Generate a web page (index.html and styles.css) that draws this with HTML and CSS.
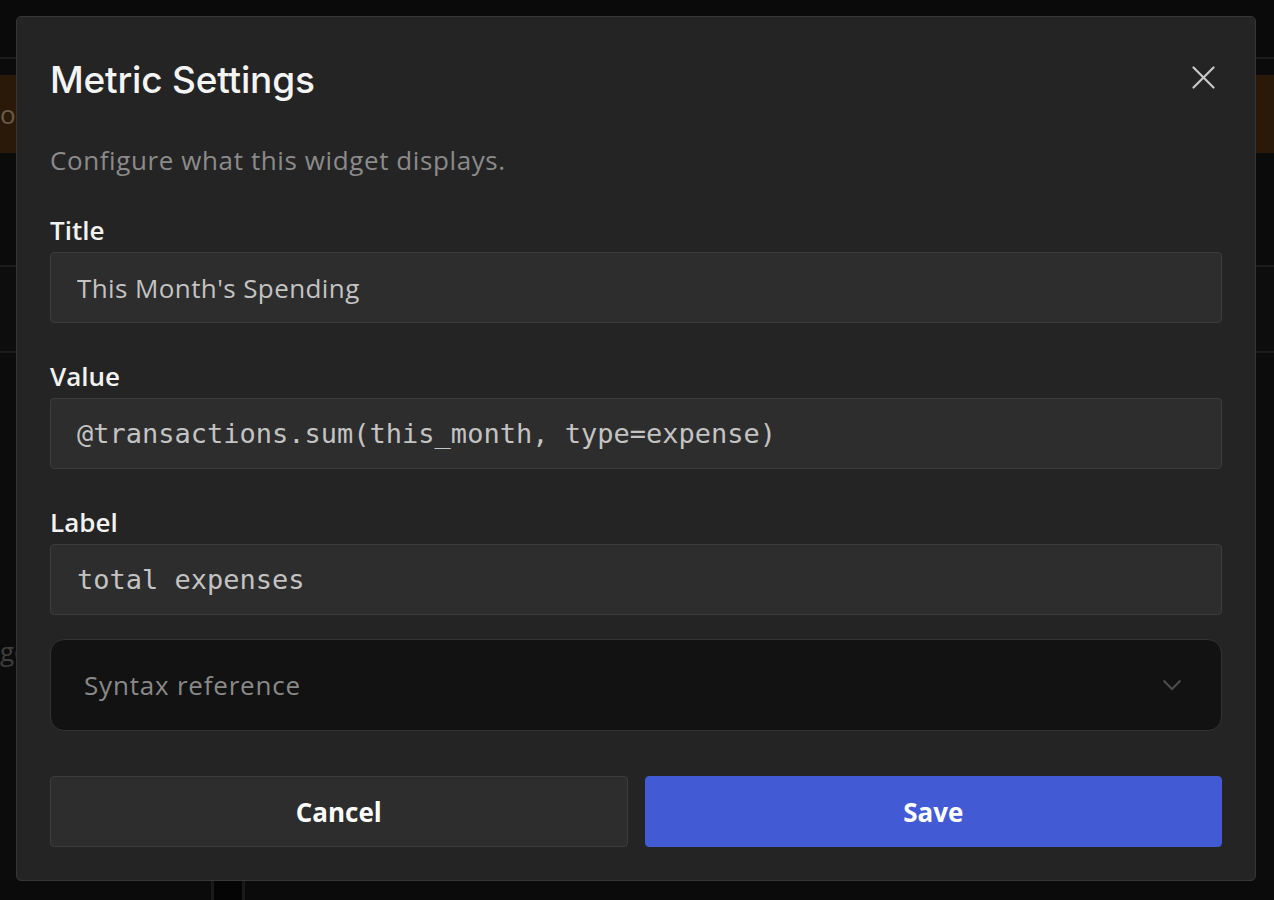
FILE: index.html
```html
<!DOCTYPE html>
<html lang="en">
<head>
    <meta charset="UTF-8">
    <meta name="viewport" content="width=device-width, initial-scale=1.0">
    <title>Metric Settings</title>
    <link rel="stylesheet" href="styles.css">
</head>
<body>
    <div class="page">
        <div class="topbar"></div>
        <div class="banner"><span class="banner-text">on</span></div>
        <div class="row row-one"></div>
        <div class="row row-two"><span class="row-text">ge</span></div>
        <div class="footer-strip"></div>
    </div>

    <div class="overlay">
        <div class="modal">
            <div class="modal-header">
                <h1>Metric Settings</h1>
                <button type="button" class="close-btn" aria-label="Close">
                    <svg width="23" height="23" viewBox="0 0 23 23">
                        <path d="M1.5 1.5 L21.5 21.5 M21.5 1.5 L1.5 21.5" stroke="#c9c9c9" stroke-width="2.2" stroke-linecap="round" fill="none"/>
                    </svg>
                </button>
            </div>

            <p class="subtitle">Configure what this widget displays.</p>

            <form class="fields">
                <div class="field">
                    <label for="title">Title</label>
                    <input type="text" id="title" value="This Month's Spending">
                </div>
                <div class="field">
                    <label for="value">Value</label>
                    <input type="text" id="value" class="mono" value="@transactions.sum(this_month, type=expense)">
                </div>
                <div class="field">
                    <label for="label">Label</label>
                    <input type="text" id="label" class="mono" value="total expenses">
                </div>
            </form>

            <div class="syntax">
                <span>Syntax reference</span>
                <svg width="20" height="12" viewBox="0 0 20 12">
                    <path d="M1.5 1.5 L10 10 L18.5 1.5" stroke="#4d4d4d" stroke-width="2" fill="none"/>
                </svg>
            </div>

            <div class="actions">
                <button type="button" class="btn btn-cancel">Cancel</button>
                <button type="button" class="btn btn-save">Save</button>
            </div>
        </div>
    </div>
</body>
</html>
```

FILE: styles.css
```css
body {
    margin: 0;
    background-color: #0b0b0b;
    font-family: "Open Sans", "Noto Sans", sans-serif;
    height: 900px;
    overflow: hidden;
}

/* dimmed dashboard behind the dialog */
.page {
    display: flex;
    flex-direction: column;
    height: 900px;
}

.topbar {
    height: 57px;
    border-bottom: 2px solid #1c1c1c;
    background-color: #0a0a0a;
}

.banner {
    margin-top: 16px;
    height: 78px;
    background-color: #2a1909;
    display: flex;
    align-items: center;
    overflow: hidden;
}

.banner-text {
    margin-left: 0;
    color: #6a5a4a;
    font-size: 26px;
    white-space: nowrap;
}

.row-one {
    margin-top: 112px;
    height: 84px;
    border-top: 2px solid #1c1c1c;
    border-bottom: 2px solid #1c1c1c;
    background-color: #0d0d0d;
}

.row-two {
    flex: 1;
    display: flex;
    align-items: flex-start;
    overflow: hidden;
    background-color: #0c0c0c;
}

.row-text {
    margin-top: 280px;
    margin-left: 0;
    color: #3e3e3e;
    font-size: 26px;
    white-space: nowrap;
}

.footer-strip {
    height: 19px;
    margin-left: 211px;
    width: 28px;
    background-color: #050505;
    border-left: 3px solid #1a1a1a;
    border-right: 3px solid #1a1a1a;
}

.overlay {
    position: fixed;
    inset: 0;
    display: flex;
    justify-content: flex-start;
    align-items: flex-start;
    padding: 16px 0 0 16px;
}

.modal {
    width: 1240px;
    box-sizing: border-box;
    padding: 33px;
    background-color: #242424;
    border: 1px solid #363636;
    border-radius: 5px;
}

.modal-header {
    display: flex;
    justify-content: space-between;
    align-items: flex-start;
    height: 60px;
}

.modal-header h1 {
    margin: 0;
    font-family: Inter, "Noto Sans", sans-serif;
    font-weight: 500;
    font-size: 37px;
    line-height: 60px;
    color: #f4f4f4;
    letter-spacing: -0.2px;
}

.close-btn {
    margin-top: 16px;
    margin-right: 7px;
    padding: 0;
    border: none;
    background: none;
    width: 23px;
    height: 23px;
    cursor: pointer;
}

.subtitle {
    margin: 32px 0 0;
    font-size: 26px;
    letter-spacing: 0.6px;
    line-height: 36px;
    color: #8b8b8b;
}

.fields {
    margin-top: 34px;
    display: flex;
    flex-direction: column;
    gap: 35px;
}

.field {
    display: flex;
    flex-direction: column;
    gap: 4px;
}

label {
    font-size: 26px;
    font-weight: 600;
    line-height: 36px;
    color: #f2f2f2;
}

input {
    height: 71px;
    box-sizing: border-box;
    padding: 0 26px;
    background-color: #2d2d2d;
    border: 1px solid #3c3c3c;
    border-radius: 4px;
    font-family: "Open Sans", "Noto Sans", sans-serif;
    font-size: 26px;
    letter-spacing: 0.4px;
    color: #c3c3c3;
    outline: none;
}

input.mono {
    font-family: "DejaVu Sans Mono", monospace;
    font-size: 27px;
    letter-spacing: 0;
}

.syntax {
    margin-top: 24px;
    height: 92px;
    box-sizing: border-box;
    padding: 0 39px 0 33px;
    display: flex;
    align-items: center;
    justify-content: space-between;
    background-color: #121212;
    border: 1px solid #333;
    border-radius: 14px;
    font-size: 26px;
    letter-spacing: 0.8px;
    color: #898989;
}

.actions {
    margin-top: 45px;
    display: flex;
    gap: 17px;
}

.btn {
    flex: 1;
    height: 71px;
    border-radius: 4px;
    font-family: "Open Sans", "Noto Sans", sans-serif;
    font-size: 26px;
    font-weight: 700;
    color: #fff;
    cursor: pointer;
}

.btn-cancel {
    background-color: #2d2d2d;
    border: 1px solid #3c3c3c;
}

.btn-save {
    background-color: #425bd5;
    border: 1px solid #425bd5;
}
```
